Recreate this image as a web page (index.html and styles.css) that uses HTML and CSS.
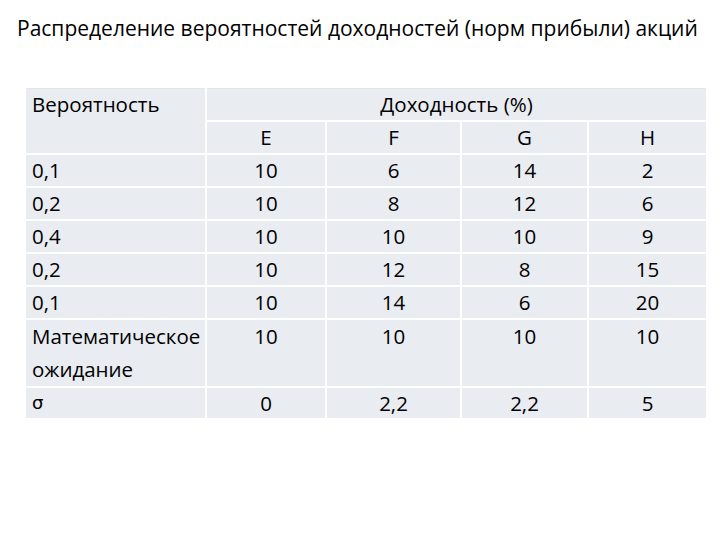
FILE: index.html
```html
<!DOCTYPE html>
<html lang="ru">
<head>
<meta charset="utf-8">
<link rel="stylesheet" href="styles.css">
</head>
<body>
<h1 class="title">Распределение вероятностей доходностей (норм прибыли) акций</h1>
<table class="grid">
  <colgroup>
    <col class="c0"><col class="c1"><col class="c2"><col class="c3"><col class="c4">
  </colgroup>
  <tr class="r">
    <td class="lab" rowspan="2">Вероятность</td>
    <td class="num" colspan="4">Доходность (%)</td>
  </tr>
  <tr class="r">
    <td class="num">E</td><td class="num">F</td><td class="num">G</td><td class="num">H</td>
  </tr>
  <tr class="r"><td class="lab">0,1</td><td class="num">10</td><td class="num">6</td><td class="num">14</td><td class="num">2</td></tr>
  <tr class="r"><td class="lab">0,2</td><td class="num">10</td><td class="num">8</td><td class="num">12</td><td class="num">6</td></tr>
  <tr class="r"><td class="lab">0,4</td><td class="num">10</td><td class="num">10</td><td class="num">10</td><td class="num">9</td></tr>
  <tr class="r"><td class="lab">0,2</td><td class="num">10</td><td class="num">12</td><td class="num">8</td><td class="num">15</td></tr>
  <tr class="r"><td class="lab">0,1</td><td class="num">10</td><td class="num">14</td><td class="num">6</td><td class="num">20</td></tr>
  <tr class="r2"><td class="lab">Математическое ожидание</td><td class="num">10</td><td class="num">10</td><td class="num">10</td><td class="num">10</td></tr>
  <tr class="r3"><td class="lab sig">σ</td><td class="num">0</td><td class="num">2,2</td><td class="num">2,2</td><td class="num">5</td></tr>
</table>
</body>
</html>
```

FILE: styles.css
```css
html, body {
  margin: 0;
  padding: 0;
  background: #ffffff;
}
body {
  width: 720px;
  height: 540px;
  font-family: "Open Sans", "Liberation Sans", sans-serif;
  color: #000000;
}
.title {
  margin: 0;
  padding: 14px 0 0 17px;
  height: 88px;
  box-sizing: border-box;
  font-size: 21px;
  font-weight: normal;
  line-height: 28px;
  white-space: nowrap;
}
.grid {
  margin-left: 24px;
  width: 682px;
  border-collapse: collapse;
  table-layout: fixed;
  font-size: 20.5px;
}
.c0 { width: 181px; }
.c1 { width: 120px; }
.c2 { width: 135px; }
.c3 { width: 127px; }
.c4 { width: 119px; }
.grid td {
  background: #e9ecf1;
  border: 2px solid #ffffff;
  padding: 0;
  vertical-align: top;
  line-height: 31px;
}
.grid tr.r td { height: 31px; }
.grid tr.r2 td { height: 64px; line-height: 33px; }
.grid tr.r3 td { height: 28px; line-height: 30px; }
.grid tr:first-child td { border-top: 1px solid #e6e2f4; }
.lab {
  text-align: left;
  padding-left: 6px !important;
}
.num {
  text-align: center;
}
.sig {
  font-family: "DejaVu Sans", sans-serif;
  font-size: 18px;
}
```
